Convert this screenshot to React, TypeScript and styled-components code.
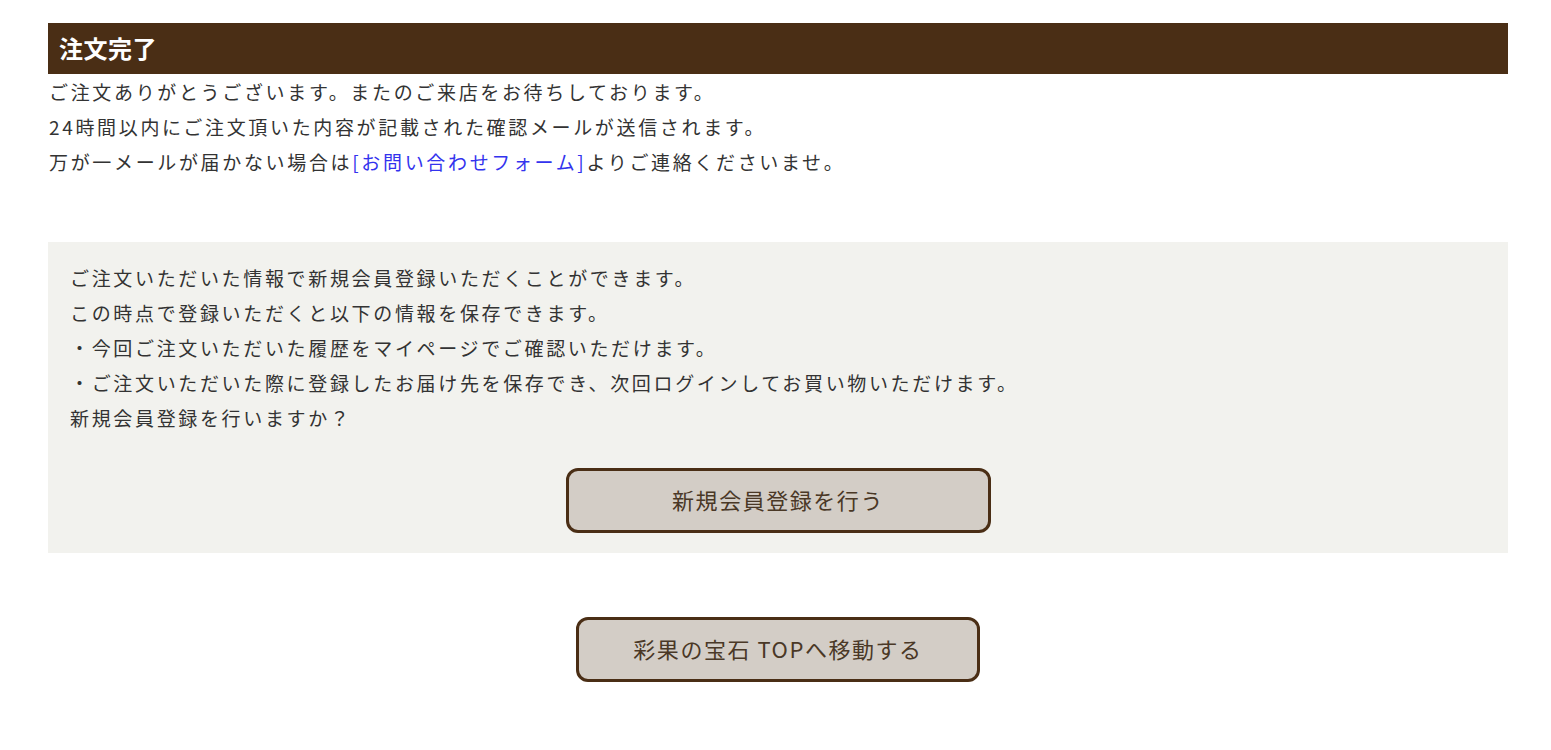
import React from 'react';
import styled, { createGlobalStyle } from 'styled-components';

const GlobalStyle = createGlobalStyle`
  html, body {
    margin: 0;
    padding: 0;
    background: #fff;
  }
  body {
    font-family: "Noto Sans CJK JP", "Noto Sans", sans-serif;
    color: #333;
  }
`;

const Page = styled.main`
  padding: 23px 43px 40px 48px;
`;

const Heading = styled.h1`
  margin: 0;
  height: 51px;
  display: flex;
  align-items: center;
  padding: 0 11px 2px;
  box-sizing: border-box;
  background: #4a2e15;
  color: #fff;
  font-family: "Liberation Serif", "Noto Sans CJK JP", serif;
  font-size: 24px;
  font-weight: 700;
  letter-spacing: 0.02em;
`;

const Message = styled.div`
  margin: 0 0 63px;
`;

const Line = styled.p`
  margin: 0;
  font-size: 19px;
  line-height: 35px;
  letter-spacing: 0.14em;
  padding-left: 1px;
  white-space: nowrap;
`;

const ContactLink = styled.a`
  color: #3333ee;
  text-decoration: none;
`;

const RegisterBox = styled.section`
  background: #f2f2ee;
  padding: 18px 21px 20px 21px;
`;

const Actions = styled.div<{ $gap: number }>`
  display: flex;
  justify-content: center;
  margin-top: ${(p) => p.$gap}px;
`;

const ActionButton = styled.button<{ $width: number }>`
  width: ${(p) => p.$width}px;
  height: 65px;
  box-sizing: border-box;
  padding: 0 0 4px;
  border: 3px solid #4a2e15;
  border-radius: 12px;
  background: #d3cdc6;
  color: #4a3826;
  font-family: "Noto Sans CJK JP", "Noto Sans", sans-serif;
  font-size: 22px;
  letter-spacing: 0.07em;
  cursor: pointer;
`;

const App: React.FC = () => (
  <>
    <GlobalStyle />
    <Page>
      <Heading>注文完了</Heading>
      <Message>
        <Line>ご注文ありがとうございます。またのご来店をお待ちしております。</Line>
        <Line>24時間以内にご注文頂いた内容が記載された確認メールが送信されます。</Line>
        <Line>
          万が一メールが届かない場合は<ContactLink href="#">[お問い合わせフォーム]</ContactLink>よりご連絡くださいませ。
        </Line>
      </Message>
      <RegisterBox>
        <Line>ご注文いただいた情報で新規会員登録いただくことができます。</Line>
        <Line>この時点で登録いただくと以下の情報を保存できます。</Line>
        <Line>・今回ご注文いただいた履歴をマイページでご確認いただけます。</Line>
        <Line>・ご注文いただいた際に登録したお届け先を保存でき、次回ログインしてお買い物いただけます。</Line>
        <Line>新規会員登録を行いますか？</Line>
        <Actions $gap={33}>
          <ActionButton $width={425}>新規会員登録を行う</ActionButton>
        </Actions>
      </RegisterBox>
      <Actions $gap={64}>
        <ActionButton $width={404}>彩果の宝石 TOPへ移動する</ActionButton>
      </Actions>
    </Page>
  </>
);

export default App;
